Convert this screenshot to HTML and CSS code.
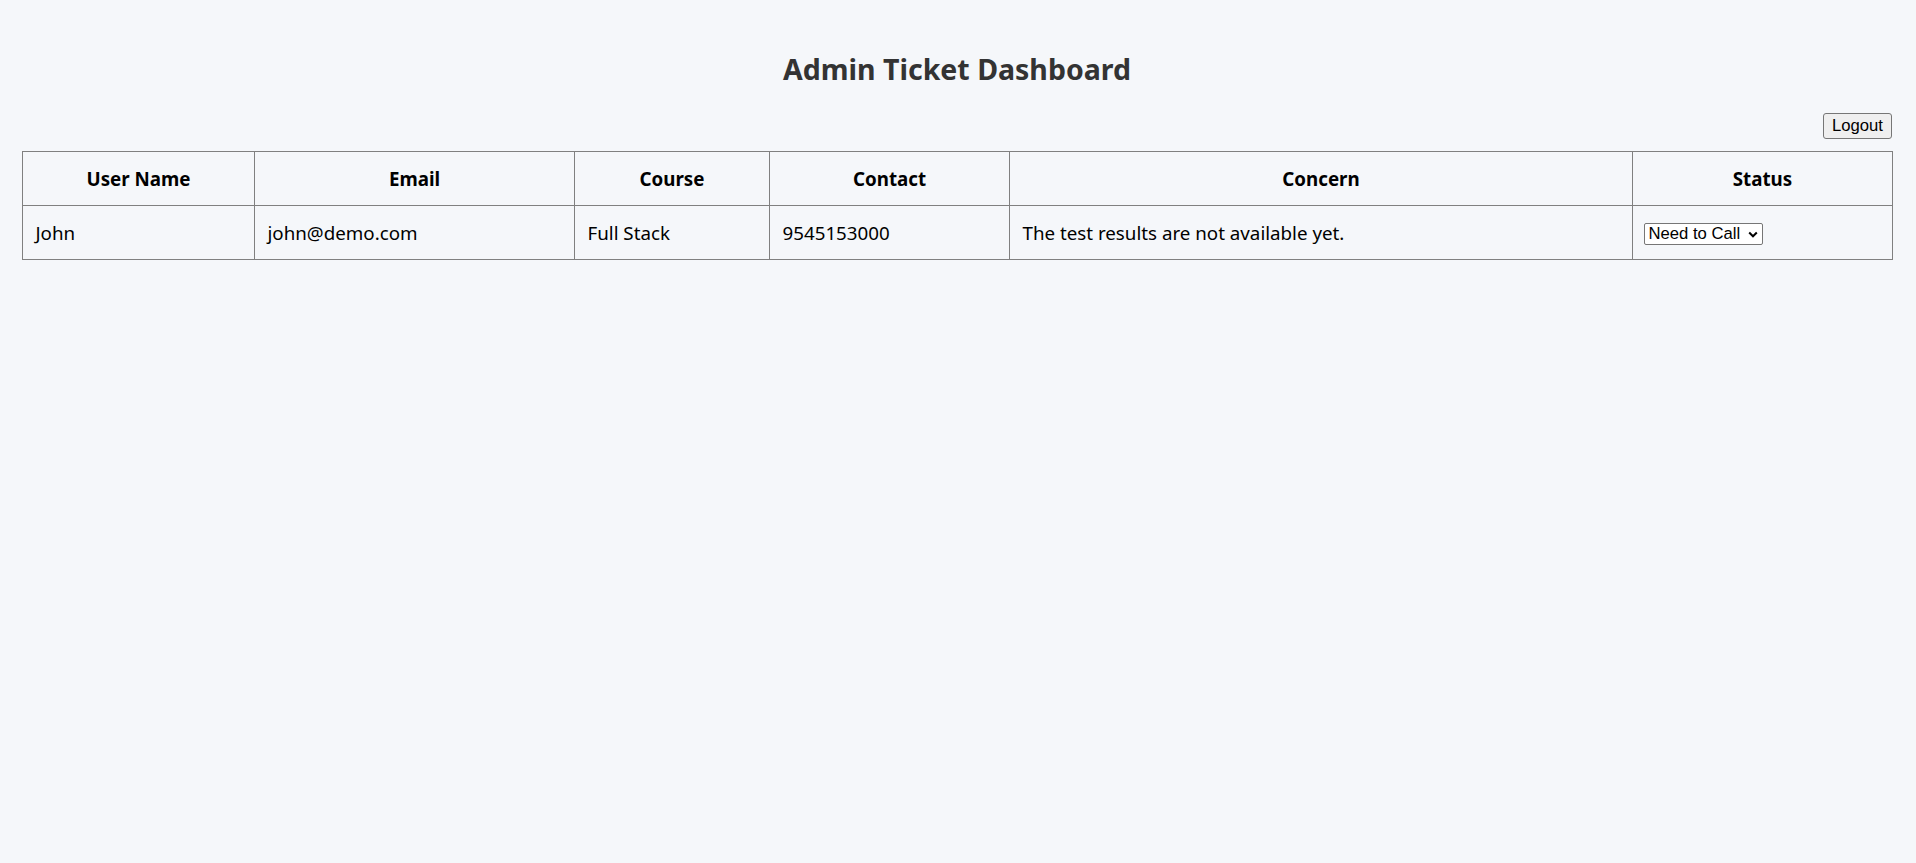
FILE: index.html
```html
<!DOCTYPE html>
<html>
<head>
<meta charset="utf-8">
<title>Admin Ticket Dashboard</title>
<link rel="stylesheet" href="styles.css">
</head>
<body>
<div class="page">
  <h2 class="title">Admin Ticket Dashboard</h2>
  <div class="toolbar">
    <button class="logout">Logout</button>
  </div>
  <table class="tickets">
    <colgroup>
      <col class="c1"><col class="c2"><col class="c3"><col class="c4"><col class="c5"><col class="c6">
    </colgroup>
    <thead>
      <tr>
        <th>User Name</th>
        <th>Email</th>
        <th>Course</th>
        <th>Contact</th>
        <th>Concern</th>
        <th>Status</th>
      </tr>
    </thead>
    <tbody>
      <tr>
        <td>John</td>
        <td>john@demo.com</td>
        <td>Full Stack</td>
        <td>9545153000</td>
        <td>The test results are not available yet.</td>
        <td>
          <div class="select-wrap">
            <span class="select-text">Need to Call</span>
            <svg class="chev" width="10" height="7" viewBox="0 0 10 7"><path d="M1.2 1.5 L5 5.3 L8.8 1.5" fill="none" stroke="#000" stroke-width="2"/></svg>
          </div>
        </td>
      </tr>
    </tbody>
  </table>
</div>
</body>
</html>
```

FILE: styles.css
```css
html, body {
  margin: 0;
  padding: 0;
  background: #f5f7fa;
}
body {
  font-family: "Noto Sans", "Open Sans", sans-serif;
  color: #000;
}
.page {
  padding: 0 24px 0 22px;
}
.title {
  margin: 0;
  padding-top: 48px;
  text-align: center;
  font-size: 28.5px;
  line-height: 42px;
  font-weight: 700;
  color: #333;
}
.toolbar {
  display: flex;
  justify-content: flex-end;
  margin-top: 23px;
  margin-bottom: 12px;
}
.logout {
  width: 69px;
  height: 26px;
  padding: 0;
  font-family: "Liberation Sans", Arial, sans-serif;
  font-size: 16.67px;
  color: #000;
  background: #efefef;
  border: 1px solid #767676;
  border-radius: 3px;
}
.tickets {
  width: 100%;
  border-collapse: collapse;
  table-layout: fixed;
}
.c1 { width: 232px; }
.c2 { width: 320px; }
.c3 { width: 195px; }
.c4 { width: 240px; }
.c5 { width: 623px; }
.c6 { width: 260px; }
.tickets th, .tickets td {
  border: 1px solid #808080;
  padding: 0 12.5px;
  font-size: 18.75px;
  height: 53px;
}
.tickets th {
  font-weight: 700;
  text-align: center;
}
.tickets td {
  text-align: left;
}
.select-wrap {
  display: inline-flex;
  align-items: center;
  justify-content: space-between;
  box-sizing: border-box;
  width: 119px;
  height: 22px;
  margin-left: -2px;
  padding: 0 4px 0 4px;
  background: #fff;
  border: 1px solid #767676;
  border-radius: 2px;
  font-family: "Liberation Sans", Arial, sans-serif;
  font-size: 16.67px;
  vertical-align: middle;
}
.chev {
  display: block;
}
```
